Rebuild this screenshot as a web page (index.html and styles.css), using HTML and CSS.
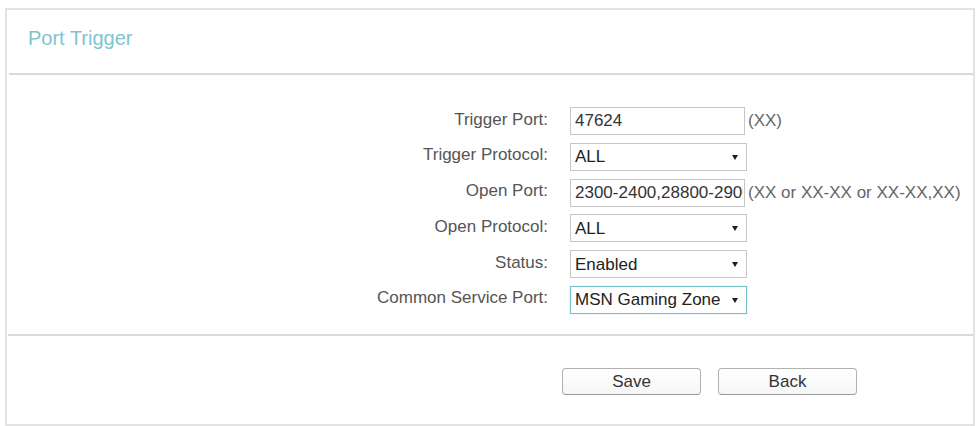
FILE: index.html
```html
<!DOCTYPE html>
<html lang="en">
<head>
<meta charset="utf-8">
<title>Port Trigger</title>
<link rel="stylesheet" href="styles.css">
</head>
<body>
<div class="panel">
  <div class="panel-head">
    <h1 class="panel-title">Port Trigger</h1>
  </div>
  <hr class="rule">
  <form class="form-grid" onsubmit="return false">
    <label class="field-label" for="trigger-port">Trigger Port:</label>
    <div class="field">
      <input class="text-input" id="trigger-port" type="text" value="47624">
      <span class="hint">(XX)</span>
    </div>

    <label class="field-label" for="trigger-proto">Trigger Protocol:</label>
    <div class="field">
      <div class="select-wrap">
        <select class="select" id="trigger-proto">
          <option>ALL</option><option>TCP</option><option>UDP</option>
        </select>
        <span class="caret"></span>
      </div>
    </div>

    <label class="field-label" for="open-port">Open Port:</label>
    <div class="field">
      <input class="text-input" id="open-port" type="text" value="2300-2400,28800-29000">
      <span class="hint">(XX or XX-XX or XX-XX,XX)</span>
    </div>

    <label class="field-label" for="open-proto">Open Protocol:</label>
    <div class="field">
      <div class="select-wrap">
        <select class="select" id="open-proto">
          <option>ALL</option><option>TCP</option><option>UDP</option>
        </select>
        <span class="caret"></span>
      </div>
    </div>

    <label class="field-label" for="status">Status:</label>
    <div class="field">
      <div class="select-wrap">
        <select class="select" id="status">
          <option>Enabled</option><option>Disabled</option>
        </select>
        <span class="caret"></span>
      </div>
    </div>

    <label class="field-label" for="service">Common Service Port:</label>
    <div class="field">
      <div class="select-wrap">
        <select class="select select-active" id="service">
          <option>MSN Gaming Zone</option>
        </select>
        <span class="caret"></span>
      </div>
    </div>
  </form>
  <hr class="rule rule-foot">
  <div class="actions">
    <button class="btn" type="button">Save</button>
    <button class="btn" type="button">Back</button>
  </div>
</div>
</body>
</html>
```
FILE: styles.css
```css
* {
  box-sizing: border-box;
}

html, body {
  margin: 0;
  padding: 0;
  background: #ffffff;
}

body {
  font-family: "Liberation Sans", Arial, sans-serif;
  font-size: 17px;
  color: #333333;
}

.panel {
  margin: 8px 1px 0 5px;
  border: 2px solid #e3e3e3;
  height: 418px;
}

.panel-head {
  height: 63px;
  padding: 16px 0 0 21px;
}

.panel-title {
  margin: 0;
  font-size: 20px;
  line-height: 24px;
  font-weight: normal;
  color: #80c4d0;
}

.rule {
  margin: 0 0 0 2px;
  border: 0;
  height: 2px;
  background: #dadada;
}

.rule-foot {
  margin-left: 1px;
}

.form-grid {
  display: grid;
  grid-template-columns: 541px auto;
  column-gap: 22px;
  row-gap: 7.8px;
  padding: 32px 0 20px;
  margin: 0;
  height: 259px;
}

.field-label {
  display: flex;
  align-items: center;
  justify-content: flex-end;
  height: 28px;
  padding-bottom: 3px;
  color: #555555;
  white-space: nowrap;
}

.field {
  display: flex;
  align-items: center;
  height: 28px;
}

.text-input {
  width: 175px;
  height: 28px;
  margin: 0;
  padding: 0 1px 0 4px;
  border: 1px solid #c6c6c6;
  font: inherit;
  color: #333333;
  background: #ffffff;
  outline: none;
}

.hint {
  margin-left: 3px;
  color: #666666;
  white-space: nowrap;
}

.select-wrap {
  position: relative;
  width: 177px;
  height: 28px;
}

.select {
  appearance: none;
  -webkit-appearance: none;
  width: 100%;
  height: 100%;
  margin: 0;
  padding: 0 20px 0 4px;
  border: 1px solid #c6c6c6;
  border-radius: 0;
  font: inherit;
  color: #222222;
  background: #ffffff;
  outline: none;
}

.select-active {
  border-color: #74c2ca;
  box-shadow: 0 0 1px 0 #8fd2d8;
}

.caret {
  position: absolute;
  right: 9px;
  top: 12px;
  width: 0;
  height: 0;
  border-left: 3.5px solid transparent;
  border-right: 3.5px solid transparent;
  border-top: 5px solid #1e1e1e;
  pointer-events: none;
}

.actions {
  display: flex;
  gap: 17px;
  padding: 32px 0 0 555px;
}

.btn {
  width: 139px;
  height: 27px;
  margin: 0;
  padding: 0;
  border: 1px solid #b0b0b0;
  border-bottom-color: #989898;
  border-radius: 4px;
  background: linear-gradient(#ffffff, #f6f6f6);
  font: inherit;
  color: #333333;
  cursor: pointer;
}
```
